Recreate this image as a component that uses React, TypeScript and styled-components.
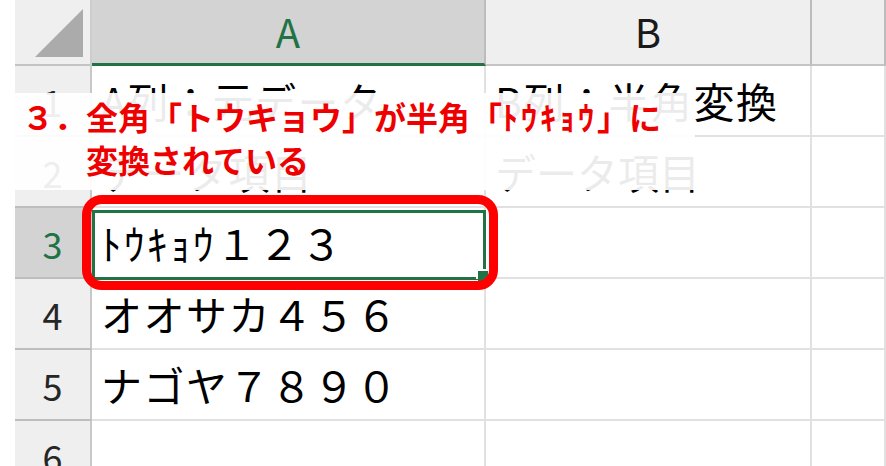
import React from "react";
import styled, { createGlobalStyle, css } from "styled-components";

const Global = createGlobalStyle`
  html, body { margin: 0; padding: 0; background: #ffffff; overflow: hidden; }
  body { font-family: "Noto Sans CJK JP", "Noto Sans", sans-serif; }
`;

const Page = styled.div`
  width: 886px;
  height: 466px;
  overflow: hidden;
  background: #ffffff;
  padding-left: 15px;
  box-sizing: border-box;
`;

const Sheet = styled.div`
  position: relative;
  display: grid;
  grid-template-columns: 77px 394px 326px 1fr;
  grid-template-rows: 66px;
  grid-auto-rows: 71px;
`;

const Corner = styled.div`
  background: #efefef;
  border-right: 2px solid #cdcdcd;
  border-bottom: 2px solid #c4c4c4;
  box-sizing: border-box;
  display: flex;
  align-items: flex-end;
  justify-content: flex-end;
  padding: 0 7px 7px 0;
`;

const ColHead = styled.div<{ $active?: boolean }>`
  background: ${(p) => (p.$active ? "#d3d3d3" : "#efefef")};
  color: ${(p) => (p.$active ? "#217346" : "#1a1a1a")};
  border-right: 2px solid #bcbcbc;
  border-bottom: ${(p) => (p.$active ? "3px solid #217346" : "2px solid #c4c4c4")};
  box-sizing: border-box;
  display: flex;
  align-items: center;
  justify-content: center;
  font-family: "Noto Sans CJK JP", sans-serif;
  font-size: 40px;
  line-height: 1;
  padding-bottom: 2px;
`;

const RowHead = styled.div<{ $active?: boolean }>`
  background: ${(p) => (p.$active ? "#d3d3d3" : "#efefef")};
  color: ${(p) => (p.$active ? "#217346" : "#262626")};
  border-right: 2px solid #c8c8c8;
  border-bottom: 2px solid #bdbdbd;
  box-sizing: border-box;
  display: flex;
  align-items: center;
  justify-content: center;
  font-family: "Noto Sans CJK JP", sans-serif;
  font-size: 36px;
  line-height: 1;
`;

const Cell = styled.div<{ $selected?: boolean }>`
  border-right: 2px solid #e1e1e1;
  border-bottom: 2px solid #e1e1e1;
  box-sizing: border-box;
  display: flex;
  align-items: center;
  padding-left: 9px;
  font-family: "Noto Sans CJK JP", sans-serif;
  font-size: 41px;
  letter-spacing: 1.5px;
  line-height: 1;
  color: #000000;
  white-space: nowrap;
  ${(p) =>
    p.$selected &&
    css`
      position: relative;
    `}
`;

const Spaced = styled.span<{ $gap: number }>`
  letter-spacing: ${(p) => p.$gap}px;
`;

const Selection = styled.div`
  position: absolute;
  top: 2px;
  left: 0;
  right: -2px;
  bottom: -3px;
  border: 3px solid #217346;
  pointer-events: none;
`;

const FillHandle = styled.div`
  position: absolute;
  right: -5px;
  bottom: -4px;
  width: 10px;
  height: 10px;
  background: #217346;
  box-shadow: -2px -2px 0 #ffffff;
`;

const Highlight = styled.div`
  position: absolute;
  top: -13px;
  left: -10px;
  right: -14px;
  bottom: -13px;
  border: 9px solid #ff0000;
  border-radius: 20px;
  z-index: 2;
  pointer-events: none;
`;

const Callout = styled.div`
  position: absolute;
  left: 0;
  top: 93px;
  width: 680px;
  height: 97px;
  background: rgba(255, 255, 255, 0.92);
  z-index: 3;
  display: flex;
  padding: 2px 0 0 7px;
  box-sizing: border-box;
  color: #ee0000;
  font-family: "Noto Sans CJK JP", sans-serif;
  font-weight: 700;
  font-size: 32px;
  line-height: 43px;
  white-space: nowrap;
`;

const CalloutNum = styled.div`
  flex: none;
`;

const CalloutBody = styled.div`
  flex: none;
`;

const Triangle = () => (
  <svg width="48" height="48" viewBox="0 0 48 48">
    <polygon points="48,0 48,48 0,48" fill="#ababab" />
  </svg>
);

const rows: { n: number; a: React.ReactNode; b: React.ReactNode }[] = [
  { n: 1, a: "A列：元データ", b: "B列：半角変換" },
  { n: 2, a: "データ項目", b: <Spaced $gap={0}>データ項目</Spaced> },
  {
    n: 3,
    a: (
      <>
        <Spaced $gap={2.5}>ﾄｳｷｮｳ</Spaced>１２３
      </>
    ),
    b: "",
  },
  { n: 4, a: "オオサカ４５６", b: "" },
  { n: 5, a: "ナゴヤ７８９０", b: "" },
  { n: 6, a: "", b: "" },
];

export default function App() {
  return (
    <Page>
      <Global />
      <Sheet>
        <Corner>
          <Triangle />
        </Corner>
        <ColHead $active>A</ColHead>
        <ColHead>B</ColHead>
        <ColHead />
        {rows.map((r) => (
          <React.Fragment key={r.n}>
            <RowHead $active={r.n === 3}>{r.n}</RowHead>
            <Cell $selected={r.n === 3}>
              {r.a}
              {r.n === 3 && (
                <>
                  <Selection>
                    <FillHandle />
                  </Selection>
                  <Highlight />
                </>
              )}
            </Cell>
            <Cell>{r.b}</Cell>
            <Cell />
          </React.Fragment>
        ))}
        <Callout>
          <CalloutNum>３．</CalloutNum>
          <CalloutBody>
            全角「トウキョウ」が半角「<Spaced $gap={3}>ﾄｳｷｮｳ</Spaced>」に
            <br />
            変換されている
          </CalloutBody>
        </Callout>
      </Sheet>
    </Page>
  );
}
